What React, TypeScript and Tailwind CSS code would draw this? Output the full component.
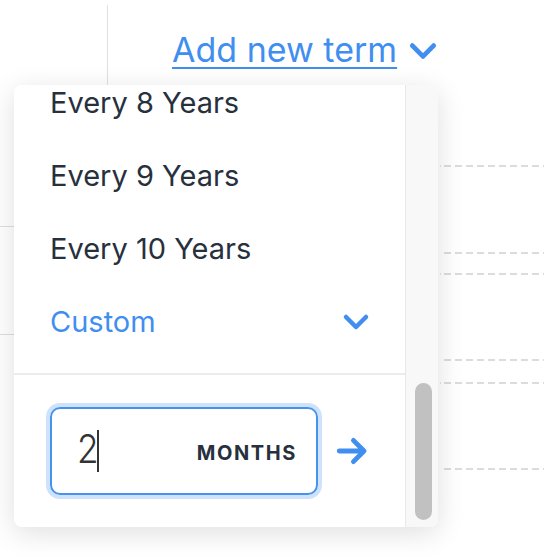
import React from "react";

const dashLines = [
  { mt: "mt-[80px]", tick: true },
  { mt: "mt-[85px]", tick: false },
  { mt: "mt-[19px]", tick: true },
  { mt: "mt-[84px]", tick: false },
  { mt: "mt-[21px]", tick: true },
  { mt: "mt-[84px]", tick: false },
];

const options = ["Every 8 Years", "Every 9 Years", "Every 10 Years"];

function ChevronDown({ className }: { className?: string }) {
  return (
    <svg viewBox="0 0 24 24" fill="none" className={className}>
      <path
        d="M4 8l8 8 8-8"
        stroke="currentColor"
        strokeWidth="3.6"
        strokeLinecap="round"
        strokeLinejoin="round"
      />
    </svg>
  );
}

function ArrowRight({ className }: { className?: string }) {
  return (
    <svg viewBox="0 0 24 24" fill="none" className={className}>
      <path
        d="M3 12h17M13 4.5l7.5 7.5-7.5 7.5"
        stroke="currentColor"
        strokeWidth="3.4"
        strokeLinecap="round"
        strokeLinejoin="round"
      />
    </svg>
  );
}

export default function App() {
  return (
    <div
      className="relative flex w-[544px] h-[558px] overflow-hidden bg-white"
      style={{ fontFamily: "Inter, 'Noto Sans', sans-serif" }}
    >
      {/* left column of the page behind */}
      <div className="flex w-[107px] shrink-0 flex-col">
        <div className="h-[227px] border-b border-[#dedede]" />
        <div className="h-[108px] border-b border-[#dedede]" />
      </div>

      {/* main column */}
      <div className="mt-[5px] flex flex-1 flex-col">
        <div className="flex h-[80px] items-start border-l border-[#e0e0e0] pl-[64px] pt-[25px]">
          <a className="text-[34px] leading-[40px] text-[#3f8ef0] underline decoration-2 underline-offset-[5px]">
            Add new term
          </a>
          <ChevronDown className="ml-[10px] mt-[5px] h-[32px] w-[32px] text-[#3f8ef0]" />
        </div>
        {dashLines.map((l, i) => (
          <div key={i} className={`${l.mt} flex h-[2px] pl-[333px]`}>
            {l.tick ? (
              <div className="mr-[3px] h-[2px] w-[1px] bg-[#e4e4e4]" />
            ) : (
              <div className="w-[4px]" />
            )}
            <div className="h-[2px] flex-1 bg-[repeating-linear-gradient(90deg,#dcdcdc_0_7px,transparent_7px_11px)]" />
          </div>
        ))}
      </div>

      {/* dropdown */}
      <div className="absolute left-[14px] top-[85px] flex h-[442px] w-[424px] overflow-hidden rounded-[8px] bg-white shadow-[0_6px_28px_rgba(0,0,0,0.13)]">
        <div className="flex flex-1 flex-col overflow-hidden border-r border-[#e8e8e8]">
          <div className="-mt-[19px] flex flex-col">
            {options.map((o) => (
              <div
                key={o}
                className="flex h-[73px] shrink-0 items-center pl-[36px] text-[29px] text-[#27313d]"
              >
                {o}
              </div>
            ))}
            <div className="flex h-[73px] shrink-0 items-center justify-between pl-[36px] pr-[34px] text-[29px] text-[#3f8ef0]">
              <span>Custom</span>
              <ChevronDown className="h-[30px] w-[30px]" />
            </div>
          </div>
          <div className="mt-[15px] border-t-2 border-[#ececec] pl-[36px] pt-[32px]">
            <div className="flex items-center">
              <div className="flex h-[88px] w-[268px] items-center rounded-[10px] border-2 border-[#4592f1] pl-[25px] pr-[19px] ring-4 ring-[#cfe2fb]">
                <span className="-mt-[4px] inline-block w-[20px] origin-left scale-x-[0.88] text-[40px] font-light leading-none text-[#333]">
                  2
                </span>
                <span className="h-[42px] w-[1.5px] bg-[#333]" />
                <span className="ml-auto mt-[4px] text-[20px] font-bold tracking-[0.08em] text-[#27313d]">
                  MONTHS
                </span>
              </div>
              <ArrowRight className="ml-[17px] h-[34px] w-[34px] text-[#3f8ef0]" />
            </div>
          </div>
        </div>
        <div className="w-[32px] shrink-0 bg-[#f8f8f8] pl-[9px] pt-[298px]">
          <div className="h-[137px] w-[17px] rounded-full bg-[#c1c1c1]" />
        </div>
      </div>
    </div>
  );
}
